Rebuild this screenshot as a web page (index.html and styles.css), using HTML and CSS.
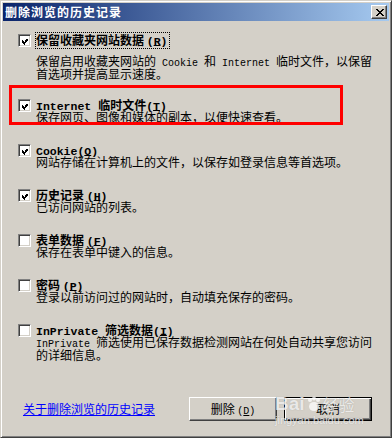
FILE: index.html
```html
<!DOCTYPE html>
<html lang="zh-CN">
<head>
<meta charset="utf-8">
<title>删除浏览的历史记录</title>
<link rel="stylesheet" href="styles.css">
</head>
<body>
<div class="window">
  <div class="titlebar">
    <span class="title">删除浏览的历史记录</span>
    <span class="close"><svg width="8" height="7" viewBox="0 0 8 7" shape-rendering="crispEdges"><path d="M0 0h2v1h-2zM6 0h2v1h-2zM1 1h2v1h-2zM5 1h2v1h-2zM2 2h4v1h-4zM3 3h2v1h-2zM2 4h4v1h-4zM1 5h2v1h-2zM5 5h2v1h-2zM0 6h2v1h-2zM6 6h2v1h-2z" fill="#000"/></svg></span>
  </div>
  <div class="content">
    <div class="item first">
      <span class="cb"><svg width="7" height="7" viewBox="0 0 7 7" shape-rendering="crispEdges"><path d="M6 0h1v1h-1zM5 1h2v1h-2zM0 2h1v1h-1zM4 2h3v1h-3zM0 3h2v1h-2zM3 3h3v1h-3zM0 4h5v1h-5zM1 5h3v1h-3zM2 6h1v1h-1z" fill="#000"/></svg></span>
      <span class="label"><span class="focus">保留收藏夹网站数据 <span class="enb">(<u>R</u>)</span></span></span>
      <p class="desc">保留启用收藏夹网站的<span class="en"> Cookie </span>和<span class="en"> Internet </span>临时文件，以保留<br>首选项并提高显示速度。</p>
    </div>
    <div class="item">
      <span class="cb"><svg width="7" height="7" viewBox="0 0 7 7" shape-rendering="crispEdges"><path d="M6 0h1v1h-1zM5 1h2v1h-2zM0 2h1v1h-1zM4 2h3v1h-3zM0 3h2v1h-2zM3 3h3v1h-3zM0 4h5v1h-5zM1 5h3v1h-3zM2 6h1v1h-1z" fill="#000"/></svg></span>
      <span class="label"><span class="enb">Internet </span>临时文件<span class="enb">(<u>T</u>)</span></span>
      <p class="desc">保存网页、图像和媒体的副本，以便快速查看。</p>
    </div>
    <div class="item">
      <span class="cb"><svg width="7" height="7" viewBox="0 0 7 7" shape-rendering="crispEdges"><path d="M6 0h1v1h-1zM5 1h2v1h-2zM0 2h1v1h-1zM4 2h3v1h-3zM0 3h2v1h-2zM3 3h3v1h-3zM0 4h5v1h-5zM1 5h3v1h-3zM2 6h1v1h-1z" fill="#000"/></svg></span>
      <span class="label"><span class="enb">Cookie(<u>O</u>)</span></span>
      <p class="desc">网站存储在计算机上的文件，以保存如登录信息等首选项。</p>
    </div>
    <div class="item">
      <span class="cb"><svg width="7" height="7" viewBox="0 0 7 7" shape-rendering="crispEdges"><path d="M6 0h1v1h-1zM5 1h2v1h-2zM0 2h1v1h-1zM4 2h3v1h-3zM0 3h2v1h-2zM3 3h3v1h-3zM0 4h5v1h-5zM1 5h3v1h-3zM2 6h1v1h-1z" fill="#000"/></svg></span>
      <span class="label">历史记录 <span class="enb">(<u>H</u>)</span></span>
      <p class="desc">已访问网站的列表。</p>
    </div>
    <div class="item">
      <span class="cb"></span>
      <span class="label">表单数据 <span class="enb">(<u>F</u>)</span></span>
      <p class="desc">保存在表单中键入的信息。</p>
    </div>
    <div class="item">
      <span class="cb"></span>
      <span class="label">密码 <span class="enb">(<u>P</u>)</span></span>
      <p class="desc">登录以前访问过的网站时，自动填充保存的密码。</p>
    </div>
    <div class="item">
      <span class="cb"></span>
      <span class="label"><span class="enb">InPrivate </span>筛选数据<span class="enb">(<u>I</u>)</span></span>
      <p class="desc"><span class="en">InPrivate </span>筛选使用已保存数据检测网站在何处自动共享您访问<br>的详细信息。</p>
    </div>
    <div class="footer">
      <a class="link" href="#">关于删除浏览的历史记录</a>
      <div class="buttons">
        <button class="btn" type="button">删除 <span class="en">(<u>D</u>)</span></button>
        <button class="btn default" type="button">取消</button>
      </div>
    </div>
  </div>
  <div class="annotation"></div>
  <div class="watermark">
    <div class="wm-top"><span class="wm-bai">Bai</span><svg class="wm-paw" width="16" height="16" viewBox="0 0 16 16"><circle cx="4" cy="4" r="2" /><circle cx="8" cy="2.5" r="2" /><circle cx="12" cy="4" r="2" /><ellipse cx="8" cy="10.5" rx="5" ry="4.5" /></svg><span class="wm-jy">经验</span></div>
    <div class="wm-url">jingyan.baidu.com</div>
  </div>
</div>
</body>
</html>
```
FILE: styles.css
```css
* { box-sizing: border-box; }
html, body { margin: 0; padding: 0; background: #d4d0c8; }
body { font-family: "Noto Sans CJK SC", sans-serif; font-size: 12px; color: #000; }

.window {
  position: relative;
  width: 392px;
  height: 438px;
  background: #d4d0c8;
  border: 1px solid;
  border-color: #d4d0c8 #404040 #404040 #d4d0c8;
  box-shadow: inset 1px 1px #ffffff, inset -1px -1px #808080;
  padding: 2px;
  display: flex;
  flex-direction: column;
}

.titlebar {
  height: 18px;
  flex: none;
  display: flex;
  align-items: center;
  padding: 0 2px;
  background: linear-gradient(to right, #0a246a, #a6caf0);
}
.title {
  color: #fff;
  font-weight: bold;
  font-size: 12px;
  line-height: 18px;
  letter-spacing: 1px;
}
.close {
  margin-left: auto;
  width: 16px;
  height: 14px;
  display: flex;
  align-items: center;
  justify-content: center;
  background: #d4d0c8;
  border: 1px solid;
  border-color: #ffffff #404040 #404040 #ffffff;
  box-shadow: inset -1px -1px #808080;
  padding-left: 1px;
}

.content {
  flex: 1;
  display: flex;
  flex-direction: column;
  padding: 12px 0 0 15px;
}

.item {
  display: grid;
  grid-template-columns: 13px auto;
  grid-template-rows: 12px auto;
  column-gap: 5px;
  margin-bottom: 20px;
}
.item.first { margin-bottom: 18px; }

.cb {
  grid-column: 1;
  grid-row: 1;
  width: 13px;
  height: 13px;
  margin-top: 1px;
  background: #fff;
  border: 1px solid;
  border-color: #808080 #ffffff #ffffff #808080;
  box-shadow: inset 1px 1px #404040, inset -1px -1px #d4d0c8;
  padding: 2px;
  display: flex;
}
.cb svg { display: block; margin: 1px 0 0 1px; }

.label {
  grid-column: 2;
  grid-row: 1;
  font-weight: bold;
  line-height: 14px;
  height: 14px;
  white-space: nowrap;
}
.label u { text-underline-offset: 0; }
.focus {
  display: inline-block;
  vertical-align: top;
  line-height: 14px;
  height: 15px;
  outline: 1px dotted #000;
  outline-offset: 0;
  padding-right: 2px;
}

.desc {
  grid-column: 2;
  grid-row: 2;
  margin: 0;
  line-height: 13px;
  white-space: nowrap;
}
.item.first .desc { margin-top: 9px; }

.en {
  font-family: "Liberation Mono", monospace;
  font-size: 10px;
  line-height: 0;
}
.enb {
  font-family: "Liberation Mono", monospace;
  font-size: 11.5px;
  font-weight: bold;
  line-height: 0;
}

.footer {
  margin-top: auto;
  display: flex;
  align-items: center;
  padding: 0 17px 14px 5px;
}
.link {
  color: #0000ff;
  text-decoration: underline;
  line-height: 14px;
}
.buttons {
  margin-left: auto;
  display: flex;
  gap: 7px;
}
.btn {
  width: 88px;
  height: 24px;
  padding: 0;
  background: #d4d0c8;
  font-family: "Noto Sans CJK SC", sans-serif;
  font-size: 12px;
  line-height: 14px;
  color: #000;
  border: 1px solid;
  border-color: #ffffff #404040 #404040 #ffffff;
  box-shadow: inset -1px -1px #808080;
}
.btn u { text-underline-offset: 1px; }
.btn.default {
  border: 1px solid #000;
  box-shadow: inset 1px 1px #ffffff, inset -1px -1px #404040, inset -2px -2px #808080;
}

.annotation {
  position: absolute;
  left: 8px;
  top: 84px;
  width: 334px;
  height: 40px;
  border: 3px solid #ff0000;
}

.watermark {
  position: absolute;
  left: 274px;
  top: 393px;
  width: 90px;
  color: rgba(255, 255, 255, 0.75);
  pointer-events: none;
}
.wm-top {
  display: flex;
  align-items: center;
  height: 20px;
  text-shadow: 0 0 1px rgba(120, 120, 120, 0.5);
}
.wm-bai {
  font-family: "Liberation Sans", sans-serif;
  font-weight: bold;
  font-size: 19px;
}
.wm-paw { fill: rgba(255, 255, 255, 0.75); margin: 0 1px; }
.wm-jy {
  font-family: "Noto Sans CJK SC", sans-serif;
  font-size: 16px;
  line-height: 20px;
}
.wm-url {
  font-family: "Liberation Sans", sans-serif;
  font-size: 11px;
  line-height: 12px;
  text-shadow: 0 0 1px rgba(120, 120, 120, 0.5);
}
```
